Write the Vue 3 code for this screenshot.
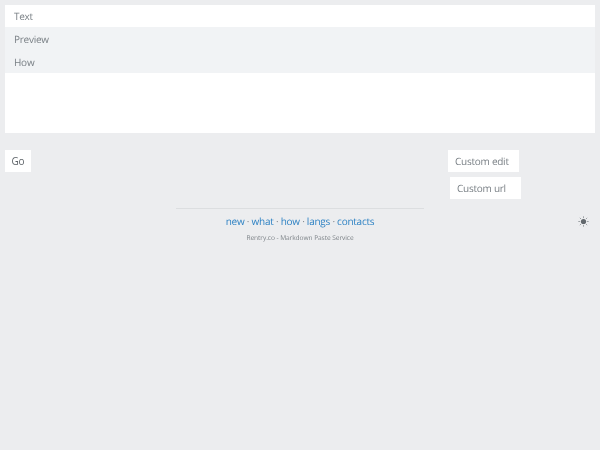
<template>
  <div class="page">
    <div class="editor">
      <div
        v-for="(tab, i) in tabs"
        :key="tab"
        class="tab"
        :class="{ active: i === 0 }"
      >
        {{ tab }}
      </div>
      <div class="editor-body"></div>
    </div>

    <div class="actions">
      <button class="btn">Go</button>
      <div class="custom">
        <div class="field edit">Custom edit</div>
        <div class="field url">Custom url</div>
      </div>
    </div>

    <div class="footer">
      <div class="footer-main">
        <div class="links">
          <template v-for="(link, i) in links" :key="link">
            <span v-if="i > 0" class="dot"> · </span>
            <a href="#" class="link">{{ link }}</a>
          </template>
        </div>
        <div class="tagline">Rentry.co - Markdown Paste Service</div>
      </div>
      <svg class="sun" width="11" height="11" viewBox="0 0 11 11">
        <circle cx="5.5" cy="5.5" r="2.6" fill="#62686d" />
        <path
          d="M5.5 0.3v1.8M5.5 8.9v1.8M0.3 5.5h1.8M8.9 5.5h1.8M1.8 1.8l1.2 1.2M8 8l1.2 1.2M9.2 1.8L8 3M3 8L1.8 9.2"
          stroke="#7c8287"
          stroke-width="0.7"
          fill="none"
        />
      </svg>
    </div>
  </div>
</template>

<script setup>
const tabs = ['Text', 'Preview', 'How']
const links = ['new', 'what', 'how', 'langs', 'contacts']
</script>

<style>
html, body { background: #ecedef; }
</style>

<style scoped>
.page {
  height: 450px; box-sizing: border-box; padding: 5px 5px 0;
  background: #ecedef; overflow: hidden; will-change: transform;
  font-family: "Open Sans", "Noto Sans", sans-serif; font-size: 10px; letter-spacing: -0.25px;
  text-rendering: geometricPrecision;
}
.editor { background: #fff; height: 128px; display: flex; flex-direction: column; }
.tab {
  height: 23px; line-height: 25px; padding-left: 9px;
  background: #f1f3f5; color: #7a8086;
}
.tab.active { height: 22px; line-height: 23px; background: #fff; }
.editor-body { flex: 1; background: #fff; }
.actions {
  display: flex; justify-content: space-between; align-items: flex-start;
  margin-top: 17px; height: 49px;
}
.btn {
  width: 26px; height: 22px; padding: 0; border: none; background: #fff;
  color: #5d6368; font: inherit; letter-spacing: inherit;
}
.custom { display: flex; flex-direction: column; gap: 5px; margin-right: 74px; }
.field {
  width: 71px; height: 22px; line-height: 22px; box-sizing: border-box;
  padding-left: 7px; background: #fff; color: #7a8086;
}
.url { margin-left: 2px; }
.footer { display: flex; justify-content: center; margin-top: 9px; position: relative; }
.footer-main { width: 248px; border-top: 1px solid #dcdee0; text-align: center; }
.links { margin-top: 5px; line-height: 14px; color: #868c92; white-space: nowrap; }
.link { color: #2f83c4; text-decoration: none; }
.tagline { margin-top: 5px; font-size: 6.6px; letter-spacing: -0.07px; line-height: 10px; color: #7d8388; }
.sun { position: absolute; left: 573px; top: 8px; }
</style>
